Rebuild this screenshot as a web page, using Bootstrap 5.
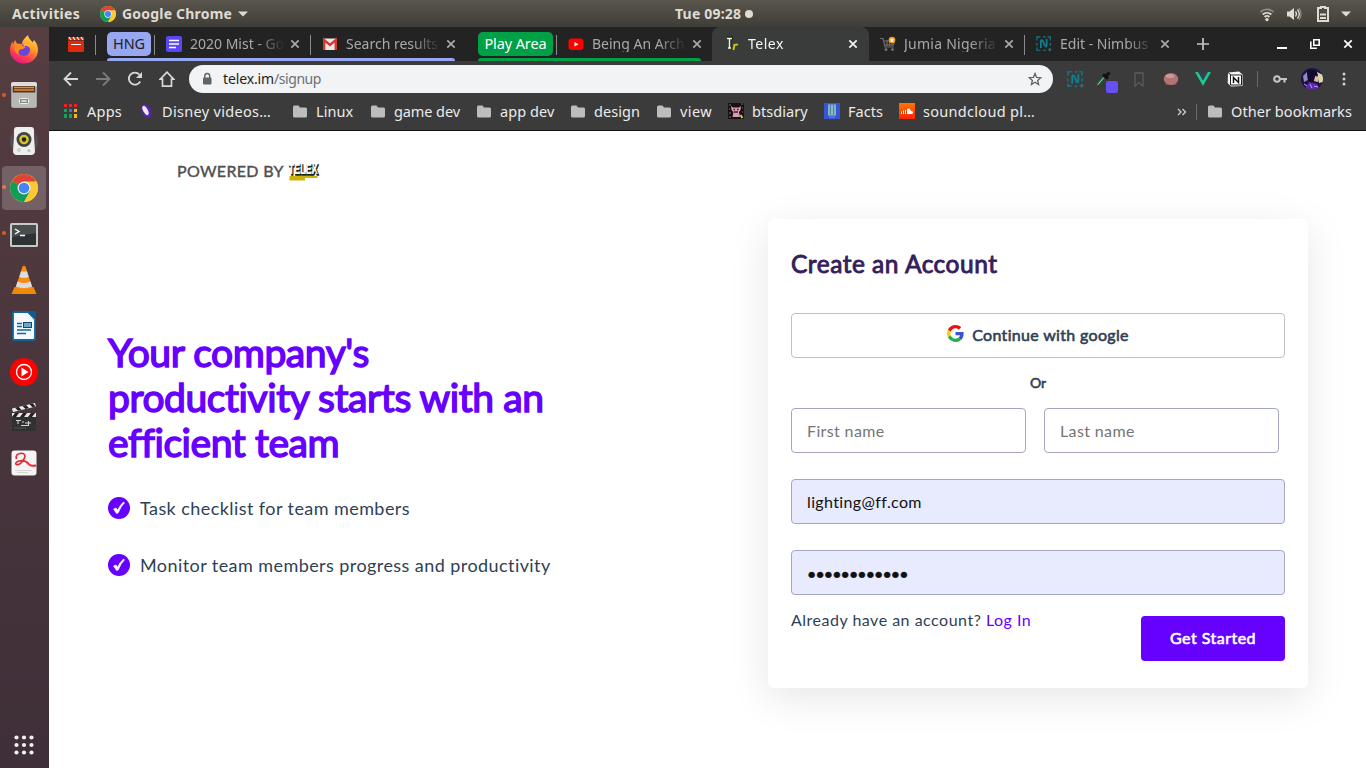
<!DOCTYPE html>
<html lang="en">
<head>
<meta charset="utf-8">
<meta name="viewport" content="width=device-width, initial-scale=1">
<title>Telex</title>
<link href="https://cdn.jsdelivr.net/npm/bootstrap@5.3.0/dist/css/bootstrap.min.css" rel="stylesheet">
<style>
body{font-family:"Noto Sans",sans-serif;font-size:14px;line-height:1.2;overflow:hidden;color:#fff}
svg{display:block;flex:none}
.desktop{width:1366px;height:768px}
/* GNOME top bar */
.topbar{height:27px;background:linear-gradient(#5a564d,#3f3d37);color:#dfdbd2;font-weight:700;font-size:14px;letter-spacing:.2px;padding-top:1px}
.topbar .act{margin-left:12px;letter-spacing:.3px}
.topbar .start{width:675px}
/* dock */
.dock{width:49px;background:linear-gradient(#563e41,#4a363d 45%,#3f2f38)}
.dock-item{height:46px;width:49px;padding-right:1px;position:relative}
.dock-item:first-child{margin-top:-1px}
.dock-item.run::before{content:"";position:absolute;left:2px;top:21px;width:4px;height:4px;border-radius:50%;background:#e95420}
.dock-item.on::after{content:"";position:absolute;left:2px;top:2px;width:44px;height:44px;border-radius:4px;background:#fff3;z-index:0}
.dock-item svg{position:relative;z-index:1}
/* tab strip */
.tabs{height:34px;background:#232323;color:#a9a9a9}
.pin{width:46px;padding-left:19px}
.grp{height:34px;position:relative}
.grp::after{content:"";position:absolute;left:0;right:11px;bottom:0;height:3px;background:var(--g);border-radius:3px 3px 0 0}
.chip{height:24px;border-radius:5px;background:var(--g);margin-right:3px;font-size:14.5px;letter-spacing:-.11px}
.g1{--g:#97a7f0;margin-left:11px}
.g2{--g:#00a047;margin-left:12px}
.g1 .chip{width:44px;color:#222}
.g2 .chip{width:75px;color:#fff}
.tab-x{height:34px;width:156px;position:relative;padding-left:12px}
.sep::before{content:"";position:absolute;left:0;top:8px;width:1px;height:20px;background:#8b8b8b}
.tab-x .ttl{width:97px;margin:0 3px 0 8px;white-space:nowrap;font-size:14px;-webkit-mask-image:linear-gradient(90deg,#000 68%,transparent 98%);mask-image:linear-gradient(90deg,#000 68%,transparent 98%)}
.tab-x.cur{width:157px;background:#3a3c3c;border-radius:8px 8px 0 0;color:#f4f4f4}
.tab-x.cur .ttl{letter-spacing:.5px}
.tab-x.jum .ttl{letter-spacing:.25px}
.tab-x.jum{width:155px;padding-left:11px}
/* toolbar */
.tools{height:36px;background:#3b3b3b;padding-left:6px}
.slot{width:32px;flex:none;height:36px}
.omni{width:864px;height:28px;border-radius:14px;background:#f1f3f4;margin:0 6px;padding:0 11px;color:#6b6f73;font-size:14px;letter-spacing:-.44px}
.omni b{font-weight:400;color:#1f1f1f;letter-spacing:-.13px}
.vr-x{width:1px;height:16px;background:#6a6a6a}
/* bookmarks */
.marks{height:34px;background:#3b3b3b;border-bottom:1px solid #111;padding:0 0 4px 14px;color:#ececec;font-size:14.5px;letter-spacing:.06px}
.bm{gap:8px;white-space:nowrap;flex:none}
.bm:nth-child(1){width:76px;letter-spacing:.24px}.bm:nth-child(2){width:154px;gap:7px;letter-spacing:.31px}.bm:nth-child(3){width:78px}.bm:nth-child(4){width:106px;letter-spacing:-.09px}
.bm:nth-child(5){width:94px}.bm:nth-child(6){width:86px}.bm:nth-child(7){width:71px;letter-spacing:.4px}.bm:nth-child(8){width:96px}.bm:nth-child(9){width:75px}
.bm:nth-child(10){letter-spacing:.3px}
.bm.fold{gap:9px}
/* signup page */
.page{height:637px;background:#fff;color:#2f3f55;font-family:Lato,sans-serif}
.heavy{font-weight:400;-webkit-text-stroke:.6px currentColor}
.brandline{height:88px;padding:30px 0 0 128px;color:#4f4f4f;font-size:16px;letter-spacing:.33px;-webkit-text-stroke:.4px currentColor}
.pitch{width:660px;padding-top:111px}
.pitch h1{font-size:39px;line-height:45px;color:#60f;margin:0;width:470px;letter-spacing:-.42px;-webkit-text-stroke-width:1.5px}
.pitch li{font-size:18px;height:57px;letter-spacing:.43px}
.pitch li span{margin:2px 0 0 10px}
.signup{width:540px;height:469px;border:0;border-radius:6px;padding:30px 23px 0;box-shadow:0 10px 40px rgba(0,0,0,.1);color:#2f3f55}
.signup h2{font-size:24.5px;line-height:29px;color:#33205c;margin:0 0 35px;letter-spacing:.5px;-webkit-text-stroke-width:.9px}
.g-btn{height:45px;border:1px solid #bfbfc4;border-radius:4px;color:#2f3f55;font-size:16px;padding:0 0 2px;letter-spacing:.33px}
.g-btn svg{margin-top:-2px}
.or{height:50px;font-size:14px}
.signup .form-control{height:45px;border:1px solid #a3a7c2;border-radius:4px;padding:1px 15px;font-size:16px;color:#111;margin-bottom:26px;letter-spacing:.37px}
.signup .form-control::placeholder{color:#757575;opacity:1}
.signup .form-control.fill{background:#e8eafe}
.signup .form-control.pw{letter-spacing:-.9px;margin-bottom:21px;padding-top:3px;-webkit-text-stroke:.5px #111}
.names .form-control{width:235px}
.go{width:144px;height:45px;background:#60f;color:#fff;border-radius:4px;border:0;font-size:16px;padding:0 0 2px;letter-spacing:.48px}
.acct{font-size:16px;margin-top:-6px;letter-spacing:.5px}
.acct a{color:#60f;text-decoration:none}
</style>
</head>
<body>
<svg width="0" height="0" class="position-absolute">
<defs>
<symbol id="chrome" viewBox="0 0 28 28"><circle cx="14" cy="14" r="14" fill="#fcc934"/><path d="M14 14 1.900 7A14 14 0 0 1 26.100 7z" fill="#db4437"/><path d="M14 14 1.900 7A14 14 0 0 0 14 28l6.500-11z" fill="#0f9d58"/><path d="M14 7.500h12.400A14 14 0 0 1 14 28l5.800-10.500z" fill="#fcc934"/><circle cx="14" cy="14" r="6.500" fill="#f1f1f1"/><circle cx="14" cy="14" r="5.300" fill="#4285f4"/></symbol>
<symbol id="folder" viewBox="0 0 14 13"><path d="M0 2a1.500 1.500 0 0 1 1.500-1.500h4L7 2.500h5.500A1.500 1.500 0 0 1 14 4v7a1.500 1.500 0 0 1-1.500 1.500h-11A1.500 1.500 0 0 1 0 11z" fill="#bdbdbd"/></symbol>
<symbol id="x" viewBox="0 0 10 10"><path d="M1.300 1.300l7.400 7.400M8.700 1.300L1.300 8.700" stroke="currentColor" stroke-width="1.700"/></symbol>
<symbol id="nim" viewBox="0 0 18 18"><path d="M1 5V1h4M8 1h3M13 1h3v4M1 8v3M1 13v3h4M8 16h3M16 8v3M13.500 15.500h4M15.500 13.500v4" fill="none" stroke="#0e7f93" stroke-width="1.300"/><path d="M5.500 13.500V5.500Q6 3.500 8 6l2 5q1.500 2 2-.5V3.500" fill="none" stroke="#0e7f93" stroke-width="2"/></symbol>
<symbol id="tick" viewBox="0 0 22 22"><circle cx="11" cy="11" r="11" fill="#60f"/><path d="M5.500 12l2.700-1 1.300 2.200Q12 8 15.500 5l1 .8Q12.500 10 10.200 16L8.500 16.500z" fill="#fff" stroke="#fff" stroke-width=".6"/></symbol>
</defs>
</svg>
<div class="desktop d-flex flex-column">
<header class="topbar d-flex align-items-center">
  <div class="start d-flex align-items-center"><span class="act">Activities</span><svg width="16" height="16" style="margin:0 6px 0 20px"><use href="#chrome"/></svg><span>Google Chrome</span><svg width="10" height="6" style="margin-left:6px"><path d="M0 .5h10L5 5.500z" fill="#dfdbd2"/></svg></div>
  <div class="d-flex align-items-center" style="gap:4px"><span>Tue 09:28</span><svg width="8" height="8"><circle cx="4" cy="4" r="4" fill="#dfdbd2"/></svg></div>
  <div class="d-flex align-items-center ms-auto" style="padding-right:15px">
    <svg width="16" height="16" viewBox="0 0 16 16"><g fill="none" stroke-width="1.800"><path d="M1.500 6a9.500 9.500 0 0 1 13 0" stroke="#8f8b83"/><path d="M3.700 8.500a6.500 6.500 0 0 1 8.600 0" stroke="#dfdbd2"/><path d="M5.600 11a3.600 3.600 0 0 1 4.800 0" stroke="#dfdbd2"/></g><circle cx="8" cy="13.600" r="1.700" fill="#dfdbd2"/></svg>
    <svg width="16" height="16" viewBox="0 0 16 16" style="margin-left:11px"><path d="M1 5.500h2.500L8 2v12l-4.500-3.500H1z" fill="#dfdbd2"/><path d="M9.500 5.500q2 2.500 0 5M11.500 3.500q3.500 4.500 0 9" fill="none" stroke="#dfdbd2" stroke-width="1.300"/><path d="M13 2q4 6 0 12" fill="none" stroke="#8f8b83" stroke-width="1.300"/></svg>
    <svg width="12" height="16" viewBox="0 0 12 16" style="margin-left:15px"><path d="M4 2V1h4v1h3v13H1V2z" fill="none" stroke="#dfdbd2" stroke-width="2"/><path d="M3 8.500h6M3 12h6" stroke="#dfdbd2" stroke-width="1.800"/></svg>
    <svg width="10" height="6" style="margin-left:12px"><path d="M0 .5h10L5 5.500z" fill="#dfdbd2"/></svg>
  </div>
</header>
<div class="d-flex flex-fill">
<nav class="dock d-flex flex-column">
  <div class="dock-item d-flex align-items-center justify-content-center"><svg width="28" height="30" viewBox="0 0 28 30"><defs><linearGradient id="ff" x1=".8" y1="0" x2=".3" y2="1"><stop offset="0" stop-color="#ffe14d"/><stop offset=".4" stop-color="#ff9a2b"/><stop offset=".75" stop-color="#ff3d4e"/><stop offset="1" stop-color="#e01490"/></linearGradient></defs><path d="M14 29.500C6 29.500 0 23.500 0 16 0 11.500 1.500 9 2.500 7.500l.5 3 2-4.500 2 3.500 5 .5C12 6 16 3 18 1c.5 4 3 4.500 4.500 7.500L24 6c3 3.500 4 6.500 4 10 0 7.500-6 13.500-14 13.500z" fill="url(#ff)"/><circle cx="14" cy="16" r="6" fill="#6a45d8"/><path d="M5 10c3 0 6 0 8 2l3 1q-3 2.500-6 2.500C8 17 8 19 9 21c-4-2-6-6-4-11z" fill="#ff8a20"/><path d="M13 10q6-2 8 5-3-4-7-3z" fill="#ffb52e"/></svg></div>
  <div class="dock-item run d-flex align-items-center justify-content-center"><svg width="28" height="28" viewBox="0 0 28 28"><rect x="1" y="1" width="26" height="26" rx="2.500" fill="#9f9f9c"/><rect x="1" y="1" width="26" height="5" rx="2" fill="#dedede"/><rect x="3" y="5" width="22" height="8" fill="#54331f"/><path d="M4 6.500h20M4 9h20" stroke="#e98a3d" stroke-width="1.500"/><path d="M2 11.500h24V25q0 1.500-1.500 1.500h-21Q2 26.500 2 25z" fill="#b8b8b5"/><rect x="9.500" y="17.500" width="9" height="5" rx="1" fill="#8b8b88" stroke="#eee"/><path d="M11.500 20h5" stroke="#eee" stroke-width="1.500"/></svg></div>
  <div class="dock-item d-flex align-items-center justify-content-center"><svg width="30" height="30" viewBox="0 0 30 30"><circle cx="15" cy="15" r="14" fill="#5e5769" opacity=".6"/><path d="M8 1h14q3 0 3 3v7l1 14q0 4-4 4H8q-4 0-4-4L5 11V4q0-3 3-3z" fill="#eeeeec"/><circle cx="15" cy="13.500" r="7.500" fill="#3d4247"/><circle cx="15" cy="13.500" r="4.800" fill="#d5bf2c"/><circle cx="15" cy="13.500" r="2.200" fill="#222"/><circle cx="10" cy="24" r="2" fill="#cfcfcd"/><circle cx="20" cy="24.500" r="1.500" fill="#bdbdbb"/></svg></div>
  <div class="dock-item run on d-flex align-items-center justify-content-center"><svg width="28" height="28" style="margin-top:1px"><use href="#chrome"/></svg></div>
  <div class="dock-item run d-flex align-items-center justify-content-center"><svg width="28" height="24" viewBox="0 0 28 24" class="mt-1"><rect width="28" height="24" rx="1.500" fill="#c9c9c7"/><rect x="2" y="2" width="24" height="20" fill="#2d3234"/><path d="M2 2h24v8L2 14z" fill="#484d4e"/><path d="M5 6l4 2.500L5 11M10 12.500h5" fill="none" stroke="#fff" stroke-width="1.400"/></svg></div>
  <div class="dock-item d-flex align-items-center justify-content-center"><svg width="26" height="30" viewBox="0 0 26 30" style="margin-top:2px"><path d="M3.500 22h19L25.500 29H.5z" fill="#f08a08"/><path d="M11.500 1.500Q13 0 14.500 1.500L21.500 23q-8.500 4.500-17 0z" fill="#f78b12"/><path d="M10 6.500h6l1.700 5.500q-4.700 2-9.400 0zM6.500 16.500q6.500 3 13 0l1.600 5q-8 3.500-16.200 0z" fill="#dcdcdc"/></svg></div>
  <div class="dock-item d-flex align-items-center justify-content-center"><svg width="24" height="30" viewBox="0 0 24 30" style="margin-top:2px"><path d="M2 1h14l7 7v19q0 2-2 2H2q-1 0-1-2V3q0-2 1-2z" fill="#f5f8fa" stroke="#0e679f" stroke-width="1.800"/><path d="M16 0h8v8z" fill="#0b5e92"/><path d="M5 12.500h5M5 15.500h5M5 19h14M5 22.500h9" stroke="#0e679f" stroke-width="1.700"/><rect x="11.500" y="11.500" width="8" height="5" fill="#6aa8cf" stroke="#15486c"/></svg></div>
  <div class="dock-item d-flex align-items-center justify-content-center"><svg width="28" height="28" viewBox="0 0 28 28" style="margin-top:2px"><circle cx="14" cy="14" r="14" fill="#f00"/><circle cx="14" cy="14" r="7.500" fill="none" stroke="#fff" stroke-width="1.300"/><path d="M11.500 9.500v9l7-4.500z" fill="#fff"/></svg></div>
  <div class="dock-item d-flex align-items-center justify-content-center"><svg width="26" height="30" viewBox="0 0 26 30"><path d="M1 6.500L24 1l1 3.500L2 10z" fill="#eee"/><path d="M4 5.800l3 3 3.500-1-3-3zM11.500 4l3 3L18 6l-3-3zM18.500 2.300l3 3 3-.8-2.500-3z" fill="#222"/><rect x="1" y="11" width="24" height="18" fill="#313131"/><path d="M1 11h24v4H1z" fill="#e6e6e6"/><path d="M4 11h4l-3 4H1zM12 11h4l-3 4H9zM20 11h4l-3 4h-4z" fill="#222"/><path d="M5 18.500h5M7 18v4M11 20h2M14 21h6M10 23.500h7M17.500 19v5" stroke="#d5d5d5" stroke-width="1.100"/><path d="M3 26h12" stroke="#555"/></svg></div>
  <div class="dock-item d-flex align-items-center justify-content-center"><svg width="26" height="26" viewBox="0 0 26 26"><rect x=".5" y=".5" width="25" height="25" rx="3" fill="#f4f4f4"/><path d="M14 12q4 4 11 2v3q-7 2-11-5z" fill="#f2949a"/><path d="M5.500 9Q4 4 10 3.200q6 .3 3 5.800-4 6.500-7.500 5.500Q3 13 8 11q6-1.500 10 3 2.500 2.500 7 1.500" fill="none" stroke="#df2b35" stroke-width="1.600"/><path d="M4 20.500h17M6 22.500h11" stroke="#d6d6d6"/></svg></div>
  <div class="mt-auto d-flex justify-content-center" style="padding:0 1px 13px 0"><svg width="20" height="20" viewBox="0 0 20 20" fill="#f2f0f0"><g id="r"><circle cx="2.500" cy="2.500" r="2.100"/><circle cx="10" cy="2.500" r="2.100"/><circle cx="17.500" cy="2.500" r="2.100"/></g><use href="#r" y="7.500"/><use href="#r" y="15"/></svg></div>
</nav>
<div class="flex-fill d-flex flex-column">
<div class="tabs d-flex align-items-center">
  <div class="pin"><svg width="16" height="16" viewBox="0 0 16 16"><path d="M0 5h16v9.500q0 1.500-1.500 1.500h-13Q0 16 0 14.500z" fill="#e12a0c"/><path d="M0 1h16v3.500H0z" fill="#e12a0c"/><path d="M1 1l2 3M5 1l2 3M9 1l2 3M13 1l2 3" stroke="#fff" stroke-width="1.200"/><path d="M3 8.500h10" stroke="#fff" stroke-width="1"/></svg></div>
  <div class="position-relative align-self-start sep" style="width:1px"></div>
  <div class="grp g1 d-flex align-items-center"><span class="chip d-flex align-items-center justify-content-center"><span>HNG</span></span>
    <div class="tab-x sep d-flex align-items-center"><svg width="16" height="16" viewBox="0 0 16 16"><rect width="16" height="16" rx="2" fill="#5b48f5"/><path d="M3 4.500h10M3 8h10M3 11.500h7" stroke="#fff" stroke-width="1.600"/></svg><span class="ttl"><span>2020 Mist - Go</span></span><svg width="10" height="10"><use href="#x"/></svg></div>
    <div class="tab-x sep d-flex align-items-center"><svg width="16" height="16" viewBox="0 0 16 16"><rect x="1" y="2.500" width="14" height="11.500" rx="1" fill="#e8e8e8"/><path d="M2.200 14V4L8 9l5.800-5v10" fill="none" stroke="#d8382b" stroke-width="2.400"/></svg><span class="ttl"><span>Search results</span></span><svg width="10" height="10"><use href="#x"/></svg></div>
  </div>
  <div class="grp g2 d-flex align-items-center"><span class="chip d-flex align-items-center justify-content-center"><span>Play Area</span></span>
    <div class="tab-x sep d-flex align-items-center"><svg width="16" height="16" viewBox="0 0 16 16"><rect x=".5" y="2.500" width="15" height="11.500" rx="3" fill="#f00"/><path d="M6.500 6v4.600l4-2.300z" fill="#fff"/></svg><span class="ttl"><span>Being An Arch</span></span><svg width="10" height="10"><use href="#x"/></svg></div>
  </div>
  <div class="tab-x cur d-flex align-items-center"><svg width="16" height="16" viewBox="0 0 16 16"><path d="M3 2h6M6 2v10" stroke="#1c2a16" stroke-width="3.500"/><path d="M3 2.500h5M5.500 2v10M4 12h3" stroke="#f4f4e8" stroke-width="1.500"/><path d="M9.500 14l1-6M10 10q2-2.500 4-1" stroke="#c9bd12" stroke-width="2" fill="none"/></svg><span class="ttl"><span>Telex</span></span><svg width="10" height="10"><use href="#x"/></svg></div>
  <div class="tab-x jum d-flex align-items-center"><svg width="16" height="16" viewBox="0 0 16 16"><path d="M0 2.500h3L5 11h9M3.500 5h11l-1 4H5M7 4v6M9.500 4v6M12 4v6" fill="none" stroke="#6d6d6d" stroke-width="1.200"/><circle cx="6" cy="13.500" r="1.500" fill="#6d6d6d"/><circle cx="12.500" cy="13.500" r="1.500" fill="#6d6d6d"/><circle cx="12" cy="4" r="3.300" fill="#f59a12"/><path d="M12 1.800l.7 1.500 1.600.2-1.200 1.100.3 1.600-1.400-.8-1.400.8.300-1.600-1.200-1.100 1.600-.2z" fill="#fff"/></svg><span class="ttl"><span>Jumia Nigeria</span></span><svg width="10" height="10"><use href="#x"/></svg></div>
  <div class="tab-x sep d-flex align-items-center"><svg width="16" height="16" viewBox="0 0 18 18"><use href="#nim" width="18" height="18"/></svg><span class="ttl"><span>Edit - Nimbus</span></span><svg width="10" height="10"><use href="#x"/></svg></div>
  <svg width="14" height="14" viewBox="0 0 14 14" style="margin-left:16px"><path d="M7 1v12M1 7h12" stroke="#c4c4c4" stroke-width="1.700"/></svg>
  <div class="ms-auto d-flex align-items-center" style="padding-right:13px;gap:23px"><svg width="10" height="10" viewBox="0 0 10 10"><path d="M0 9h10" stroke="#fff" stroke-width="2"/></svg><svg width="10" height="10" viewBox="0 0 10 10"><path d="M3.800.8h5.400v5.400H3.800z" fill="none" stroke="#fff" stroke-width="1.600"/><path d="M.8 2.500v6.700h6" fill="none" stroke="#fff" stroke-width="1.600"/></svg><svg width="10" height="10" color="#fff"><use href="#x"/></svg></div>
</div>
<div class="tools d-flex align-items-center">
  <div class="slot d-flex align-items-center justify-content-center"><svg width="16" height="16" viewBox="0 0 16 16"><path d="M15 8H2M8 1.500L1.500 8 8 14.500" fill="none" stroke="#d8d8d8" stroke-width="1.800"/></svg></div>
  <div class="slot d-flex align-items-center justify-content-center"><svg width="16" height="16" viewBox="0 0 16 16"><path d="M1 8h13M8 1.500L14.500 8 8 14.500" fill="none" stroke="#7c7c7c" stroke-width="1.800"/></svg></div>
  <div class="slot d-flex align-items-center justify-content-center"><svg width="16" height="16" viewBox="0 0 16 16"><path d="M13.200 10.500a6 6 0 1 1-.8-6.800" fill="none" stroke="#d8d8d8" stroke-width="1.800"/><path d="M15 1v6H9z" fill="#d8d8d8"/></svg></div>
  <div class="slot d-flex align-items-center justify-content-center"><svg width="16" height="16" viewBox="0 0 16 16"><path d="M8 1.200L1.200 8.200H3.500v7h9v-7h2.300z" fill="none" stroke="#d8d8d8" stroke-width="1.700"/></svg></div>
  <div class="omni d-flex align-items-center"><svg width="14" height="14" viewBox="0 0 14 14"><rect x="3" y="5.500" width="8.500" height="7" rx="1" fill="#5f6368"/><path d="M4.800 6V4a2.400 2.400 0 0 1 4.900 0v2" fill="none" stroke="#5f6368" stroke-width="1.400"/></svg><span style="margin-left:9px"><b>telex.im</b><span>/signup</span></span><svg class="ms-auto" width="14" height="14" viewBox="0 0 14 14"><path d="M7 1.500l1.600 3.900 4.200.3-3.200 2.700 1 4.100L7 10.300l-3.600 2.200 1-4.100L1.200 5.700l4.200-.3z" fill="none" stroke="#5f6368" stroke-width="1.300"/></svg></div>
  <div class="slot d-flex align-items-center justify-content-center"><svg width="17" height="17" viewBox="0 0 18 18"><use href="#nim" width="18" height="18"/></svg></div>
  <div class="slot d-flex align-items-center justify-content-center"><svg width="24" height="28" viewBox="0 0 24 28" class="ms-1"><path d="M1 19L8 11" stroke="#16793a" stroke-width="2.500"/><path d="M.5 20L7 12.500" stroke="#c5d9c5" stroke-width=".8"/><path d="M6 9.500l5 4M8.500 11.500L12.500 7.500" stroke="#111" stroke-width="3"/><rect x="9" y="16" width="12" height="12" rx="2" fill="#6450f5"/></svg></div>
  <div class="slot d-flex align-items-center justify-content-center"><svg width="10" height="15" viewBox="0 0 10 15"><path d="M1 1h8v13L5 10.500 1 14z" fill="none" stroke="#5c5c5c" stroke-width="1.300"/></svg></div>
  <div class="slot d-flex align-items-center justify-content-center"><svg width="16" height="14" viewBox="0 0 16 14"><path d="M3 10h10l1 3H2z" fill="#7d4747"/><ellipse cx="8" cy="7" rx="7.300" ry="6" fill="#b27373"/><ellipse cx="7" cy="4" rx="4.500" ry="2" fill="#cb9a98"/></svg></div>
  <div class="slot d-flex align-items-center justify-content-center"><svg width="16" height="14" viewBox="0 0 16 14"><path d="M0 0h3.200L8 8.300 12.800 0H16L8 14z" fill="#1fc688"/><path d="M3.200 0h3L8 3l1.800-3h3L8 8.300z" fill="#35405f"/></svg></div>
  <div class="slot d-flex align-items-center justify-content-center"><svg width="16" height="16" viewBox="0 0 16 16"><path d="M1 1.500L12 .5l3.500 3V15L4 15.500.7 12z" fill="#f5f5f5"/><path d="M1 1.500l3 2.500" stroke="#222"/><path d="M3.500 4h11v10h-11z" fill="#fff" stroke="#222"/><path d="M6.500 12V6.500l5 5V6" fill="none" stroke="#111" stroke-width="1.500"/></svg></div>
  <div class="vr-x" style="margin:0 6px"></div>
  <div class="slot d-flex align-items-center justify-content-center"><svg width="14" height="8" viewBox="0 0 14 8"><circle cx="4" cy="4" r="2.800" fill="none" stroke="#c4c4c4" stroke-width="2"/><path d="M7 4h7M11.500 4v3.500" stroke="#c4c4c4" stroke-width="2.200"/></svg></div>
  <div class="slot d-flex align-items-center justify-content-center"><svg width="22" height="22" viewBox="0 0 22 22"><clipPath id="av"><circle cx="11" cy="11" r="11"/></clipPath><g clip-path="url(#av)"><path fill="#1d1340" d="M0 0h22v22H0z"/><path d="M2 8l4-4 1 8-4 2z" fill="#8d8bc0"/><path d="M16 4l6 3v7l-4 1z" fill="#d9d8ac"/><path d="M14 8l4 1-1 5-4-1z" fill="#e0bdb0"/><path d="M3 22l5-8 8 2 4 6z" fill="#5b2ba6"/><path d="M6 3q8-4 11 4l-3 1-2 6-5-1z" fill="#120a2c"/><path d="M3 16l3 2M9 16l2 4M13 18l4 1" stroke="#b8a6f0"/></g></svg></div>
  <div class="slot d-flex align-items-center justify-content-center"><svg width="4" height="14" viewBox="0 0 4 14" fill="#cfcfcf"><circle cx="2" cy="2" r="1.500"/><circle cx="2" cy="7" r="1.500"/><circle cx="2" cy="12" r="1.500"/></svg></div>
</div>
<div class="marks d-flex align-items-center">
  <div class="bm d-flex align-items-center"><svg width="16" height="14" viewBox="0 0 16 14"><path fill="#f22020" d="M1 0h3v3H1zM6 0h3v3H6zM11 0h3v3h-3z"/><path fill="#17a35b" d="M1 5h3v3H1zM1 10h3v4H1zM6 10h3v4H6z"/><path fill="#3a70f0" d="M6 5h3v3H6z"/><path fill="#f5b70f" d="M11 5h3v3h-3zM11 10h3v4h-3z"/></svg><span>Apps</span></div>
  <div class="bm d-flex align-items-center"><svg width="16" height="16" viewBox="0 0 16 16"><ellipse cx="7.500" cy="8" rx="4.700" ry="7.500" transform="rotate(-28 7.500 8)" fill="#5a24a5"/><ellipse cx="6.500" cy="7.500" rx="2.300" ry="5" transform="rotate(-28 6.500 7.500)" fill="#eee8fb"/></svg><span>Disney videos…</span></div>
  <div class="bm fold d-flex align-items-center"><svg width="14" height="13"><use href="#folder"/></svg><span>Linux</span></div>
  <div class="bm fold d-flex align-items-center"><svg width="14" height="13"><use href="#folder"/></svg><span>game dev</span></div>
  <div class="bm fold d-flex align-items-center"><svg width="14" height="13"><use href="#folder"/></svg><span>app dev</span></div>
  <div class="bm fold d-flex align-items-center"><svg width="14" height="13"><use href="#folder"/></svg><span>design</span></div>
  <div class="bm fold d-flex align-items-center"><svg width="14" height="13"><use href="#folder"/></svg><span>view</span></div>
  <div class="bm d-flex align-items-center"><svg width="16" height="16" viewBox="0 0 16 16"><path fill="#161214" d="M0 0h16v16H0z"/><path d="M3 3l2 1.500h6L13 3l-.5 4-1.500 2 1 5H4.500l1-5L3.500 7z" fill="#dc9bb0"/><path d="M5.500 6.500h1.500M9 6.500h1.500M6 9h4" stroke="#38202b" stroke-width="1.300"/><path d="M1 2h2M13 1h2M1 6h1M14 5h1M1 10h2M14 9h1M1 14h2" stroke="#8d6674"/><path d="M12.500 12l2 3" stroke="#d8d343" stroke-width="2"/></svg><span>btsdiary</span></div>
  <div class="bm d-flex align-items-center"><svg width="16" height="16" viewBox="0 0 16 16"><path fill="#3556d6" d="M0 0h16v16H0z"/><path fill="#8ab7c8" d="M4 1.500h8v11H4z"/><path d="M6.300 2v9.500M9.700 2v9.500" stroke="#4f7d99" stroke-width="1"/><path d="M5 14h6" stroke="#6d93e8"/></svg><span>Facts</span></div>
  <div class="bm d-flex align-items-center"><svg width="16" height="16" viewBox="0 0 16 16"><defs><linearGradient id="sc" x2="0" y2="1"><stop stop-color="#f70"/><stop offset="1" stop-color="#f20"/></linearGradient></defs><path fill="url(#sc)" d="M0 0h16v16H0z"/><path d="M2.500 8.500v2.500M4.500 7.500v3.500M6.500 7v4" stroke="#fff" stroke-width="1"/><path d="M8 11V6q3-1.500 4 2 2-.5 2 1.500 0 1.500-1.500 1.500z" fill="#fff"/></svg><span>soundcloud pl…</span></div>
  <svg class="ms-auto" width="10" height="8" viewBox="0 0 10 8"><path d="M1 1l3 3-3 3M5.500 1l3 3-3 3" fill="none" stroke="#d0d0d0" stroke-width="1.300"/></svg>
  <div class="vr-x" style="margin:0 11px 0 9px"></div>
  <div class="bm fold d-flex align-items-center" style="width:158px"><svg width="14" height="13"><use href="#folder"/></svg><span>Other bookmarks</span></div>
</div>
<main class="page">
  <div class="brandline d-flex align-items-start"><span>POWERED BY</span><svg width="34" height="20" viewBox="0 0 34 20" overflow="visible" style="margin-left:3px"><path d="M2.500 15h28v2H18v2.500H2.500z" fill="#cfb30c"/><g font-family="Liberation Sans" font-weight="700" font-size="15.500" style="letter-spacing:0;-webkit-text-stroke:0"><text x="2.600" y="13.600" textLength="29" lengthAdjust="spacingAndGlyphs" fill="#17240f" style="stroke:#17240f;stroke-width:1.600px">TELEX</text><text x="1.800" y="12.800" textLength="29" lengthAdjust="spacingAndGlyphs" fill="#fff" style="stroke:none" aria-hidden="true">TELEX</text></g></svg></div>
  <div class="d-flex" style="padding-left:59px">
    <section class="pitch"><h1 class="heavy"><span>Your company's</span><br><span>productivity starts with an</span><br><span>efficient team</span></h1>
      <ul class="list-unstyled m-0" style="padding-top:14px">
        <li class="d-flex align-items-center"><svg width="22" height="22"><use href="#tick"/></svg><span>Task checklist for team members</span></li>
        <li class="d-flex align-items-center"><svg width="22" height="22"><use href="#tick"/></svg><span>Monitor team members progress and productivity</span></li>
      </ul></section>
    <form class="signup card">
      <h2 class="heavy"><span>Create an Account</span></h2>
      <button type="button" class="btn g-btn heavy d-flex align-items-center justify-content-center gap-2"><svg width="17" height="17" viewBox="0 0 48 48"><path fill="#e11" d="M24 9.500c3.500 0 6.700 1.200 9.200 3.600l6.900-6.900C35.900 2.400 30.500 0 24 0 14.600 0 6.500 5.400 2.600 13.200l8 6.200C12.400 13.700 17.700 9.500 24 9.500z"/><path fill="#3c50d8" d="M47 24.500c0-1.600-.2-3.100-.4-4.500H24v9h12.900c-.6 3-2.300 5.500-4.800 7.200l7.700 6C44.400 38 47 31.800 47 24.500z"/><path fill="#fbd00c" d="M10.500 28.600a14 14 0 0 1 0-9.200l-8-6.200a24 24 0 0 0 0 21.600z"/><path fill="#22b14c" d="M24 48c6.500 0 11.900-2.100 15.900-5.800l-7.700-6c-2.200 1.500-4.900 2.300-8.200 2.300-6.300 0-11.600-4.200-13.500-9.900l-8 6.200C6.500 42.600 14.600 48 24 48z"/></svg><span>Continue with google</span></button>
      <div class="or heavy d-flex align-items-center justify-content-center"><span>Or</span></div>
      <div class="names d-flex" style="gap:18px"><input class="form-control" placeholder="First name"><input class="form-control" placeholder="Last name"></div>
      <input class="form-control fill" value="lighting@ff.com">
      <input class="form-control fill pw" type="password" value="abcdefghijkl">
      <div class="d-flex justify-content-between align-items-start"><div class="acct"><span>Already have an account?</span> <a href="#"><span>Log In</span></a></div><button type="button" class="btn go heavy"><span>Get Started</span></button></div>
    </form>
  </div>
</main>
</div>
</div>
</div>
<script src="https://cdn.jsdelivr.net/npm/bootstrap@5.3.0/dist/js/bootstrap.bundle.min.js"></script>
</body>
</html>
